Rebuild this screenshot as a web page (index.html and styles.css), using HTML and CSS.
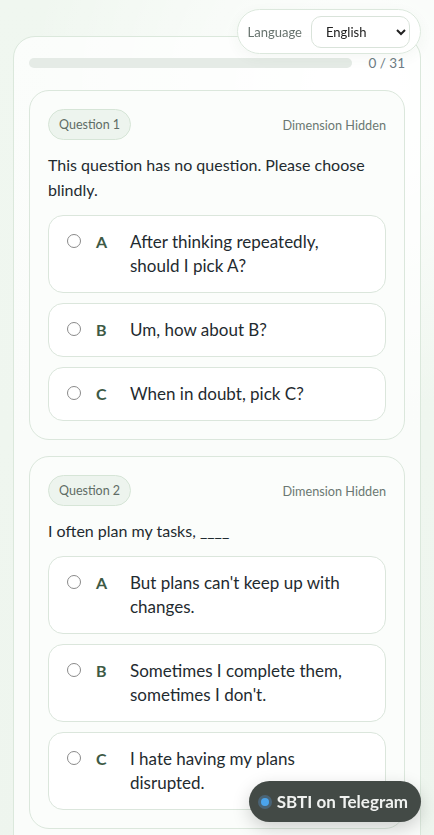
FILE: index.html
```html
<!DOCTYPE html>
<html lang="en">
<head>
<meta charset="utf-8">
<title>SBTI Test</title>
<link rel="stylesheet" href="styles.css">
</head>
<body>
<div class="lang-pill">
  <label class="lang-label" for="lang">Language</label>
  <select id="lang" class="lang-select">
    <option>English</option>
    <option>中文</option>
  </select>
</div>

<main class="panel">
  <div class="progress-row">
    <div class="progress-track"><div class="progress-fill" style="width:0%"></div></div>
    <span class="progress-count">0 / 31</span>
  </div>

  <section class="card">
    <div class="card-head">
      <span class="badge">Question 1</span>
      <span class="dim">Dimension Hidden</span>
    </div>
    <p class="question">This question has no question. Please choose blindly.</p>
    <div class="options">
      <label class="option"><span class="radio"></span><span class="letter">A</span><span class="opt-text">After thinking repeatedly, should I pick A?</span></label>
      <label class="option"><span class="radio"></span><span class="letter">B</span><span class="opt-text">Um, how about B?</span></label>
      <label class="option"><span class="radio"></span><span class="letter">C</span><span class="opt-text">When in doubt, pick C?</span></label>
    </div>
  </section>

  <section class="card">
    <div class="card-head">
      <span class="badge">Question 2</span>
      <span class="dim">Dimension Hidden</span>
    </div>
    <p class="question">I often plan my tasks, ____</p>
    <div class="options">
      <label class="option"><span class="radio"></span><span class="letter">A</span><span class="opt-text">But plans can't keep up with changes.</span></label>
      <label class="option"><span class="radio"></span><span class="letter">B</span><span class="opt-text">Sometimes I complete them, sometimes I don't.</span></label>
      <label class="option"><span class="radio"></span><span class="letter">C</span><span class="opt-text">I hate having my plans disrupted.</span></label>
    </div>
  </section>
</main>

<a class="tg-btn" href="#"><span class="tg-dot"></span>SBTI on Telegram</a>
</body>
</html>
```

FILE: styles.css
```css
* { box-sizing: border-box; }

html, body {
  margin: 0;
  padding: 0;
}

body {
  font-family: Lato, "Noto Sans", "Liberation Sans", sans-serif;
  color: #1f2b30;
  background:
    radial-gradient(circle at 82% 10%, rgba(255,255,255,1) 0, rgba(255,255,255,0) 38%),
    linear-gradient(180deg, #f0f7f0 0%, #eef5ee 100%);
  min-height: 100vh;
}

.panel {
  margin: 36px 13px 0;
  padding: 16px 15px 30px;
  border: 1px solid #dbe8dc;
  border-radius: 22px;
  background: rgba(255,255,255,0.7);
}

.progress-row {
  display: flex;
  align-items: center;
  gap: 16px;
  height: 20px;
  margin-bottom: 17px;
}

.progress-track {
  flex: 1;
  height: 10px;
  border-radius: 99px;
  background: #e5ebe6;
  overflow: hidden;
}

.progress-fill {
  height: 100%;
  background: #5c8a66;
}

.progress-count {
  font-size: 13.5px;
  color: #6c7b83;
}

.card {
  border: 1px solid #dbe7dc;
  border-radius: 20px;
  background: #fbfdfb;
  padding: 18px;
  margin-bottom: 16px;
}

.card-head {
  display: flex;
  justify-content: space-between;
  align-items: center;
}

.badge {
  display: inline-block;
  padding: 6px 10px;
  line-height: 17px;
  font-size: 12.5px;
  color: #5f6c65;
  background: #edf4ee;
  border: 1px solid #d6e5d7;
  border-radius: 99px;
}

.dim {
  font-size: 12.7px;
  color: #6b7872;
}

.question {
  margin: 12px 0 13px;
  font-size: 16px;
  line-height: 25px;
  color: #1f2b30;
}

.options {
  display: flex;
  flex-direction: column;
  gap: 10px;
}

.option {
  display: flex;
  align-items: flex-start;
  padding: 14px 18px;
  border: 1px solid #dbe6dc;
  border-radius: 15px;
  background: #ffffff;
  cursor: pointer;
}

.radio {
  flex: none;
  width: 14px;
  height: 14px;
  margin-top: 4px;
  border: 1px solid #8a8a8a;
  border-radius: 50%;
  background: #fff;
}

.letter {
  flex: none;
  width: 34px;
  margin-left: 15px;
  font-size: 16px;
  line-height: 24px;
  font-weight: 700;
  color: #3d5a45;
}

.opt-text {
  flex: 1;
  font-size: 17px;
  line-height: 24px;
  color: #1f2b30;
}

.lang-pill {
  position: fixed;
  top: 9px;
  right: 13px;
  height: 45px;
  display: flex;
  align-items: center;
  gap: 9px;
  padding: 0 10px 0 10px;
  background: rgba(255,255,255,0.95);
  border: 1px solid #dce8dd;
  border-radius: 99px;
  box-shadow: 0 4px 14px rgba(60,90,60,0.05);
}

.lang-label {
  font-size: 13px;
  color: #67736e;
}

.lang-select {
  width: 99px;
  height: 32px;
  padding: 0 4px 0 10px;
  font-family: Lato, "Noto Sans", sans-serif;
  font-size: 13px;
  color: #222;
  background: #fff;
  border: 1px solid #d9e3da;
  border-radius: 10px;
}

.tg-btn {
  position: fixed;
  right: 13px;
  bottom: 13px;
  height: 41px;
  display: flex;
  align-items: center;
  gap: 8px;
  padding: 0 13px 0 12px;
  border-radius: 99px;
  background: #434a46;
  color: #f0f2f0;
  font-size: 17px;
  font-weight: 700;
  text-decoration: none;
  box-shadow: 0 6px 18px rgba(0,0,0,0.18);
}

.tg-dot {
  width: 8px;
  height: 8px;
  border-radius: 50%;
  background: #4ba4ec;
  box-shadow: 0 0 0 3px rgba(90,150,210,0.35);
}
```
